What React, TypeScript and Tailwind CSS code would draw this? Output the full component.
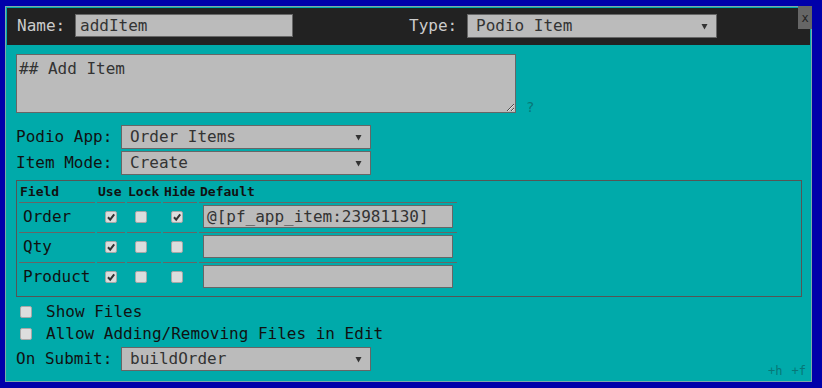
import React from "react";

function Arrow() {
  return (
    <svg width="7" height="7" viewBox="0 0 7 7" className="shrink-0">
      <polygon points="0.5,1 6.5,1 3.5,6.5" fill="#333333" />
    </svg>
  );
}

function Select({ value }: { value: string }) {
  return (
    <div className="flex items-center justify-between w-[250px] h-[24px] bg-[#bbbbbb] border border-[#666666] pl-[8px] pr-[8px] text-[16px] text-[#333333]">
      <span className="leading-none">{value}</span>
      <Arrow />
    </div>
  );
}

function Check({ checked }: { checked?: boolean }) {
  return (
    <span className="flex items-center justify-center w-[12px] h-[12px] rounded-[2px] bg-[#dddddd] border border-[#a8a8a8]">
      {checked && (
        <svg width="10" height="10" viewBox="0 0 10 10">
          <path d="M2 5.2 L4.2 7.6 L8.2 2.4" stroke="#333333" strokeWidth="2" fill="none" />
        </svg>
      )}
    </span>
  );
}

function TextBox({ value, w }: { value: string; w: string }) {
  return (
    <div className={`${w} h-[23px] bg-[#bbbbbb] border border-[#666666] pl-[3px] flex items-center text-[16px] text-[#333333] leading-none whitespace-nowrap`}>
      {value}
    </div>
  );
}

const rows = [
  { name: "Order", use: true, lock: false, hide: true, def: "@[pf_app_item:23981130]" },
  { name: "Qty", use: true, lock: false, hide: false, def: "" },
  { name: "Product", use: true, lock: false, hide: false, def: "" },
];

export default function App() {
  return (
    <div className="w-[822px] h-[388px] bg-[#0000aa] pl-[5px] pt-[6px] font-['DejaVu_Sans_Mono',monospace] overflow-hidden">
      <div className="relative w-[807px] h-[376px] bg-[#00aaaa] border border-[#7fa9a9] p-[1px]">
        {/* header */}
        <div className="h-[37px] bg-[#222222] flex items-start pt-[6px] pl-[10px]">
          <div className="flex items-center h-[23px]">
            <span className="text-[16px] text-[#cccccc] leading-none w-[48px]">Name:</span>
            <div className="ml-[10px] w-[218px] h-[23px] bg-[#bbbbbb] border border-[#666666] pl-[4px] flex items-center text-[16px] text-[#333333] leading-none">
              addItem
            </div>
          </div>
          <div className="flex items-center h-[24px] ml-[116px]">
            <span className="text-[16px] text-[#cccccc] leading-none w-[48px]">Type:</span>
            <div className="ml-[10px]">
              <Select value="Podio Item" />
            </div>
          </div>
        </div>

        {/* close */}
        <div className="absolute -top-[1px] -right-[1px] w-[14px] h-[23px] bg-[#666666] flex items-center justify-center text-[12px] text-[#222222] leading-none">
          x
        </div>

        {/* body */}
        <div className="pl-[9px] pt-[9px]">
          <div className="flex items-end">
            <textarea
              defaultValue="## Add Item"
              className="w-[500px] h-[59px] bg-[#bbbbbb] border border-[#666666] p-[2px] text-[16px] text-[#333333] outline-none font-['DejaVu_Sans_Mono',monospace] resize"
            />
            <span className="ml-[10px] mb-[-1px] text-[14px] leading-none text-[#077777]">?</span>
          </div>

          <div className="mt-[12px] flex flex-col gap-[2px]">
            <div className="flex items-center">
              <span className="w-[105px] text-[16px] text-[#111111] leading-none">Podio App:</span>
              <Select value="Order Items" />
            </div>
            <div className="flex items-center">
              <span className="w-[105px] text-[16px] text-[#111111] leading-none">Item Mode:</span>
              <Select value="Create" />
            </div>
          </div>

          <div className="mt-[5px] w-[786px] h-[117px] border border-[#555555]">
            <table className="border-separate border-spacing-[2px] text-[#111111]">
              <thead>
                <tr>
                  <th className="w-[76px] h-[17px] p-0 pl-[1px] text-left text-[13px] font-bold leading-none">Field</th>
                  <th className="w-[28px] h-[17px] p-0 pl-[1px] text-left text-[13px] font-bold leading-none">Use</th>
                  <th className="w-[34px] h-[17px] p-0 pl-[1px] text-left text-[13px] font-bold leading-none">Lock</th>
                  <th className="w-[34px] h-[17px] p-0 pl-[1px] text-left text-[13px] font-bold leading-none">Hide</th>
                  <th className="w-[258px] h-[17px] p-0 pl-[1px] text-left text-[13px] font-bold leading-none">Default</th>
                </tr>
              </thead>
              <tbody>
                {rows.map((r) => (
                  <tr key={r.name}>
                    <td className="h-[28px] p-0 pl-[4px] border-t border-[#666666] text-[16px] leading-none align-middle">{r.name}</td>
                    <td className="h-[28px] p-0 pl-[8px] border-t border-[#666666] align-middle">
                      <Check checked={r.use} />
                    </td>
                    <td className="h-[28px] p-0 pl-[8px] border-t border-[#666666] align-middle">
                      <Check checked={r.lock} />
                    </td>
                    <td className="h-[28px] p-0 pl-[8px] border-t border-[#666666] align-middle">
                      <Check checked={r.hide} />
                    </td>
                    <td className="h-[28px] p-0 pl-[4px] border-t border-[#666666] align-middle">
                      <TextBox value={r.def} w="w-[250px]" />
                    </td>
                  </tr>
                ))}
              </tbody>
            </table>
          </div>

          <div className="mt-[4px] flex items-center h-[22px] pl-[4px]">
            <Check />
            <span className="ml-[14px] text-[16px] text-[#111111] leading-none">Show Files</span>
          </div>
          <div className="flex items-center h-[22px] pl-[4px]">
            <Check />
            <span className="ml-[14px] text-[16px] text-[#111111] leading-none">Allow Adding/Removing Files in Edit</span>
          </div>
          <div className="mt-[2px] flex items-center">
            <span className="w-[105px] text-[16px] text-[#111111] leading-none">On Submit:</span>
            <Select value="buildOrder" />
          </div>
        </div>

        <div className="absolute right-[5px] bottom-[4px] flex gap-[9px] text-[12px] leading-none text-[#077777]">
          <span>+h</span>
          <span>+f</span>
        </div>
      </div>
    </div>
  );
}
